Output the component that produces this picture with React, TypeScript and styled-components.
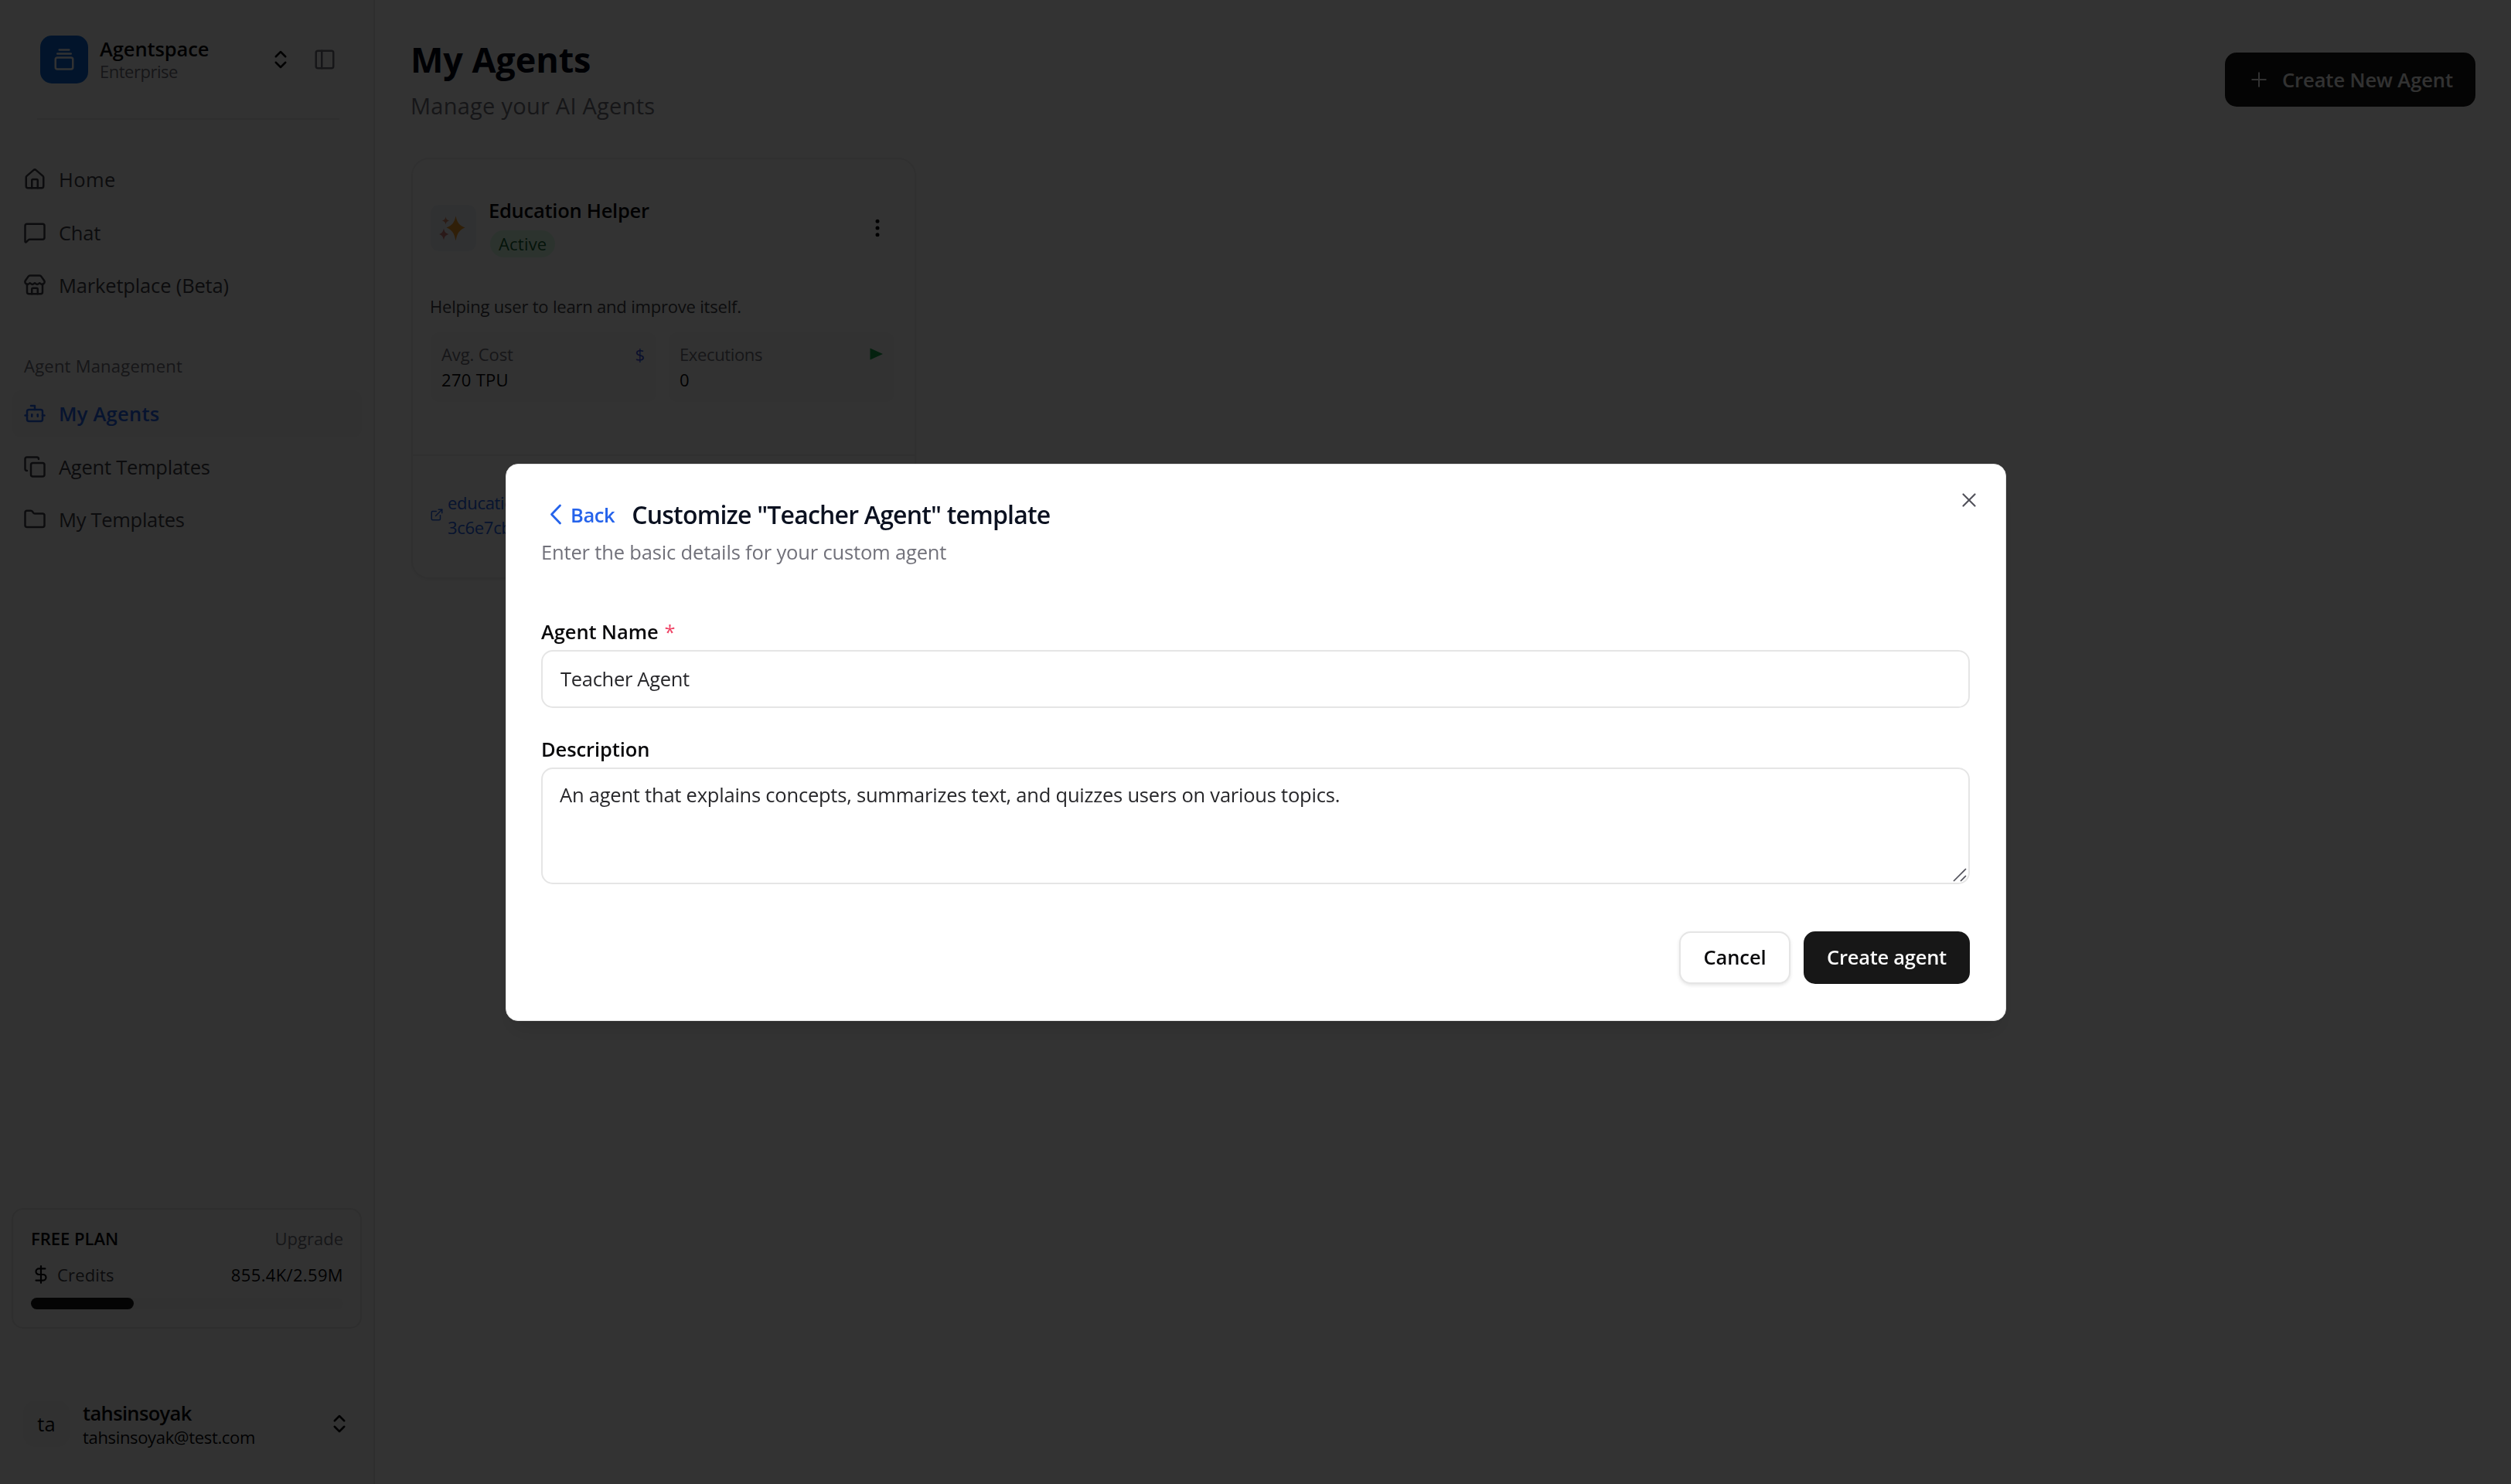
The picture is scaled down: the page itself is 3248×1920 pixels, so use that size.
import React from 'react';
import styled, { createGlobalStyle, css } from 'styled-components';
import {
  Bot,
  ChevronsUpDown,
  Copy,
  DollarSign,
  EllipsisVertical,
  ExternalLink,
  Folder,
  GalleryVerticalEnd,
  House,
  MessageSquare,
  PanelLeft,
  Plus,
  Store,
  X,
} from 'lucide-react';

const color = {
  ink: '#09090b',
  text: '#3f3f46',
  muted: '#71717a',
  line: '#e5e5e5',
  faint: '#efeff0',
  blue: '#2563eb',
  primary: '#171717',
};

const Global = createGlobalStyle`
  *, *::before, *::after { box-sizing: border-box; }
  html, body, #root { height: 100%; }
  body {
    margin: 0;
    overflow: hidden;
    background: #ffffff;
    color: ${color.ink};
    font-family: "Open Sans", "Noto Sans", sans-serif;
    font-size: 25.5px;
  }
  button, input, textarea { font: inherit; color: inherit; }
  svg { display: block; flex: none; }
`;

/* Text */

type TextProps = { $track?: number; $weight?: number; $tone?: string };

const textStyle = css<TextProps>`
  display: block;
  white-space: pre;
  letter-spacing: ${p => p.$track ?? 0}px;
  font-weight: ${p => p.$weight ?? 400};
  color: ${p => p.$tone ?? color.ink};
`;

const Body = styled.span<TextProps>`
  ${textStyle}
  font-size: 25.5px;
  line-height: 32px;
`;

const Small = styled.span<TextProps>`
  ${textStyle}
  font-size: 22px;
  line-height: 26px;
`;

/* Page frame */

const Shell = styled.div`
  display: flex;
  height: 1920px;
`;

const Sidebar = styled.aside`
  display: flex;
  flex-direction: column;
  width: 485px;
  flex: none;
  background: #fafafa;
  border-right: 2px solid ${color.line};
`;

const Workspace = styled.header`
  display: flex;
  align-items: center;
  height: 153px;
  padding: 0 48px 0 52px;
`;

const Logo = styled.div`
  display: grid;
  place-items: center;
  width: 62px;
  height: 62px;
  margin-right: 15px;
  border-radius: 15px;
  background: #0a66d8;
  color: #fafafa;
`;

const Stack = styled.div<{ $gap?: number }>`
  display: flex;
  flex: 1;
  flex-direction: column;
  gap: ${p => p.$gap ?? 0}px;
  padding-bottom: 1px;
`;

const PanelToggle = styled.div`
  margin-left: 27px;
  color: ${color.muted};
`;

const Divider = styled.hr`
  height: 2px;
  margin: 0 44px 0 48px;
  border: 0;
  background: ${color.line};
`;

const Nav = styled.nav<{ $top: number }>`
  display: flex;
  flex-direction: column;
  gap: 7.5px;
  margin-top: ${p => p.$top}px;
  padding: 0 15px 0 16px;
`;

const NavLabel = styled.div`
  display: flex;
  align-items: center;
  height: 53.5px;
  padding: 4px 15px 0;
`;

const NavItem = styled.a<{ $active?: boolean }>`
  display: flex;
  align-items: center;
  gap: 16px;
  height: 61px;
  padding: 0 14px 1px;
  border-radius: 11px;
  color: ${p => (p.$active ? color.blue : color.text)};
  background: ${p => (p.$active ? '#f4f4f5' : 'transparent')};
`;

const PlanCard = styled.section`
  display: flex;
  flex-direction: column;
  height: 156px;
  margin: auto 15px 0 15px;
  padding: 20px 22px 0 23px;
  border: 2px solid ${color.line};
  border-radius: 15px;
`;

const PlanRow = styled.div`
  display: flex;
  align-items: center;
  justify-content: space-between;
  height: 34px;
  margin-bottom: 13px;
`;

const Credits = styled.div`
  display: flex;
  align-items: center;
  gap: 8px;
  color: ${color.ink};
`;

const Track = styled.div`
  height: 15px;
  border-radius: 8px;
  background: #f4f4f5;
`;

const Fill = styled.div`
  width: 33%;
  height: 100%;
  border-radius: 8px;
  background: ${color.primary};
`;

const User = styled.footer`
  display: flex;
  align-items: center;
  height: 86px;
  margin: 80px 0 35px;
  padding: 0 29px 0 30px;
`;

const Avatar = styled.div`
  display: grid;
  place-items: center;
  width: 60px;
  height: 60px;
  margin-right: 17px;
  border-radius: 15px;
  background: #f4f4f5;
`;

/* Main area */

const Main = styled.main`
  flex: 1;
  padding: 46px 46px 0 47px;
`;

const PageHeader = styled.header`
  display: flex;
  align-items: center;
  justify-content: space-between;
`;

const Title = styled.h1`
  margin: 0 0 7px -1px;
  padding-top: 1px;
  font-size: 45px;
  font-weight: 700;
  line-height: 60px;
  letter-spacing: -0.1px;
  white-space: pre;
  color: #020817;
`;

const Subtitle = styled.p`
  margin: 0 0 0 -1px;
  font-size: 29px;
  line-height: 45px;
  letter-spacing: 0.25px;
  color: ${color.muted};
`;

const CreateButton = styled.button`
  display: flex;
  align-items: center;
  gap: 15px;
  width: 324px;
  height: 70px;
  padding: 0 0 0 29px;
  border: 0;
  border-radius: 15px;
  background: ${color.primary};
  color: #fafafa;
`;

const AgentCard = styled.article`
  display: flex;
  flex-direction: column;
  width: 653px;
  height: 545px;
  margin-top: 45px;
  border: 2px solid ${color.faint};
  border-radius: 23px;
  background: #ffffff;
  box-shadow: 0 2px 4px rgba(0, 0, 0, 0.05);
`;

const CardHead = styled.div`
  display: flex;
  align-items: center;
  gap: 16px;
  margin-top: 50px;
  padding: 0 33px 0 23px;
`;

const CardIcon = styled.div`
  display: grid;
  place-items: center;
  width: 59px;
  height: 60px;
  padding-right: 3px;
  border-radius: 11px;
  background: #eff4fb;
`;

const Badge = styled.span`
  align-self: flex-start;
  margin: 10px 0 0 2px;
  padding: 0 11px;
  border-radius: 18px;
  background: #dcfce7;
  color: #166534;
  font-size: 22px;
  line-height: 35px;
  letter-spacing: 0.2px;
`;

const Summary = styled.div`
  padding: 49px 22px 0;
`;

const Stats = styled.div`
  display: grid;
  grid-template-columns: 292px 292px;
  gap: 16px;
  margin: 21px 0 0 23px;
`;

const Stat = styled.div`
  height: 90px;
  padding: 11px 15px 0 14px;
  border-radius: 11px;
  background: #f9f9fa;
`;

const StatLine = styled.div`
  display: flex;
  align-items: center;
  justify-content: space-between;
  height: 33.5px;
`;

const CardFoot = styled.div`
  display: flex;
  flex: 1;
  align-items: center;
  gap: 5px;
  margin-top: 68px;
  padding: 0 22px 5px;
  border-top: 2px solid ${color.faint};
  border-radius: 0 0 21px 21px;
  background: #fcfcfc;
  color: ${color.blue};
`;

const LinkText = styled(Small)`
  line-height: 32px;
`;

/* Dialog */

const Overlay = styled.div`
  position: fixed;
  inset: 0;
  display: flex;
  align-items: center;
  justify-content: center;
  background: rgba(0, 0, 0, 0.8);
`;

const Dialog = styled.section`
  position: relative;
  width: 1941px;
  height: 721px;
  margin-left: 1px;
  padding: 41px 46px 0 45px;
  border: 1px solid ${color.line};
  border-radius: 16px;
  background: #ffffff;
  box-shadow: 0 19px 28px -6px rgba(0, 0, 0, 0.1), 0 8px 11px -8px rgba(0, 0, 0, 0.1);
`;

const CloseButton = styled.div`
  position: absolute;
  top: 31px;
  right: 32px;
  color: #52525b;
`;

const DialogHead = styled.header`
  display: flex;
  align-items: center;
  height: 48px;
  padding-left: 11px;
`;

const BackLink = styled.a`
  display: flex;
  align-items: center;
  gap: 11px;
  margin-right: 22px;
  color: ${color.blue};
`;

const DialogTitle = styled.h2`
  margin: 0;
  font-size: 32px;
  font-weight: 600;
  line-height: 48px;
  letter-spacing: -0.8px;
  white-space: pre;
  color: #0b1120;
`;

const DialogNote = styled(Body)`
  margin: 4px 0 65px;
  line-height: 40px;
`;

const Label = styled.label`
  display: flex;
  gap: 8px;
  margin-bottom: 6px;
`;

const LabelText = styled(Body)`
  line-height: 36px;
`;

const fieldStyle = css`
  display: block;
  width: 1848px;
  border: 2px solid ${color.line};
  border-radius: 15px;
  outline: none;
  background: #ffffff;
  color: #27272a;
`;

const Field = styled.input`
  ${fieldStyle}
  height: 75px;
  margin-bottom: 35px;
  padding: 0 23px;
  letter-spacing: -0.3px;
`;

const AreaWrap = styled.div`
  position: relative;
  width: 1848px;
`;

const Area = styled.textarea`
  ${fieldStyle}
  height: 151px;
  padding: 14px 22px;
  line-height: 38px;
  letter-spacing: -0.22px;
  resize: none;
`;

const Grip = styled.svg`
  position: absolute;
  right: 4px;
  bottom: 3px;
`;

const Actions = styled.div`
  display: flex;
  justify-content: flex-end;
  gap: 17px;
  margin-top: 61px;
`;

const Action = styled.button<{ $primary?: boolean }>`
  display: grid;
  place-items: center;
  width: ${p => (p.$primary ? 215 : 144)}px;
  height: 68px;
  padding: 0 0 1px;
  border: ${p => (p.$primary ? '0' : `2px solid ${color.line}`)};
  border-radius: 15px;
  background: ${p => (p.$primary ? color.primary : '#ffffff')};
  box-shadow: ${p => (p.$primary ? 'none' : '0 2px 4px rgba(0, 0, 0, 0.1)')};
`;

const Sparkles = () => (
  <svg width="34" height="33" viewBox="0 0 34 33">
    <path d="M21.500 0.500C23.500 9 25.500 12 33.500 15.500C25.500 19 23.500 23 21.500 32.500C19.500 23 17.500 19 9.500 15.500C17.500 12 19.500 9 21.500 0.500Z" fill="#ee9a2c" />
    <path d="M8.500 1.500C9.200 4.500 10 5.500 13 6.500C10 7.500 9.200 8.500 8.500 11.500C7.800 8.500 7 7.500 4 6.500C7 5.500 7.800 4.500 8.500 1.500Z" fill="#d98a6a" />
    <path d="M6 16.500C7 21 8.200 22.500 12.500 24C8.200 25.500 7 27 6 31.500C5 27 3.800 25.500 0 24C3.800 22.500 5 21 6 16.500Z" fill="#cf7f78" />
  </svg>
);

const BackChevron = () => (
  <svg width="16" height="27" viewBox="0 0 16 27" fill="none" stroke="currentColor" strokeWidth="2.8" strokeLinecap="round" strokeLinejoin="round">
    <path d="M13.500 2 2.500 13.500 13.500 25" />
  </svg>
);

const PlayMark = () => (
  <svg width="17" height="16" viewBox="0 0 17 16" fill="#16a34a">
    <path d="M0.500 0.500 17 8 0.500 15.500Z" />
  </svg>
);

const mainNav = [
  { label: 'Home', icon: House, track: 0.42 },
  { label: 'Chat', icon: MessageSquare, track: -0.2 },
  { label: 'Marketplace (Beta)', icon: Store, track: -0.16 },
];

const agentNav = [
  { label: 'My Agents', icon: Bot, track: 0.25, active: true },
  { label: 'Agent Templates', icon: Copy, track: -0.25 },
  { label: 'My Templates', icon: Folder, track: -0.29 },
];

type NavEntry = { label: string; icon: React.ElementType; track: number; active?: boolean };

const NavRow = ({ label, icon: Icon, track, active }: NavEntry) => (
  <NavItem $active={active}>
    <Icon size={30} />
    <Body $track={track} $weight={active ? 600 : 400} $tone={active ? color.blue : color.text}>
      {label}
    </Body>
  </NavItem>
);

export default function App() {
  return (
    <>
      <Global />
      <Shell>
        <Sidebar>
          <Workspace>
            <Logo>
              <GalleryVerticalEnd size={30} />
            </Logo>
            <Stack>
              <Body $weight={600} $track={-0.1}>Agentspace</Body>
              <Small $track={-0.49} $tone={color.muted}>Enterprise</Small>
            </Stack>
            <ChevronsUpDown size={30} />
            <PanelToggle>
              <PanelLeft size={30} />
            </PanelToggle>
          </Workspace>
          <Divider />
          <Nav $top={47}>
            {mainNav.map(n => <NavRow key={n.label} {...n} />)}
          </Nav>
          <Nav $top={44}>
            <NavLabel>
              <Small $track={0.23} $tone={color.muted}>Agent Management</Small>
            </NavLabel>
            {agentNav.map(n => <NavRow key={n.label} {...n} />)}
          </Nav>
          <PlanCard>
            <PlanRow>
              <Small $weight={600}>FREE PLAN</Small>
              <Small $tone={color.muted}>Upgrade</Small>
            </PlanRow>
            <PlanRow>
              <Credits>
                <DollarSign size={26} />
                <Small $track={0.16} $tone={color.text}>Credits</Small>
              </Credits>
              <Small $track={0.35}>855.4K/2.59M</Small>
            </PlanRow>
            <Track>
              <Fill />
            </Track>
          </PlanCard>
          <User>
            <Avatar>
              <Body>ta</Body>
            </Avatar>
            <Stack $gap={2}>
              <Body $weight={600} $track={-0.65}>tahsinsoyak</Body>
              <Small $track={-0.34}>tahsinsoyak@test.com</Small>
            </Stack>
            <ChevronsUpDown size={30} />
          </User>
        </Sidebar>

        <Main>
          <PageHeader>
            <div>
              <Title>My Agents</Title>
              <Subtitle>Manage your AI Agents</Subtitle>
            </div>
            <CreateButton>
              <Plus size={30} strokeWidth={1.6} />
              <Body $weight={600} $track={-0.07} $tone="#fafafa">Create New Agent</Body>
            </CreateButton>
          </PageHeader>

          <AgentCard>
            <CardHead>
              <CardIcon>
                <Sparkles />
              </CardIcon>
              <Stack>
                <Body $weight={600} $track={-0.26}>Education Helper</Body>
                <Badge>Active</Badge>
              </Stack>
              <EllipsisVertical size={30} />
            </CardHead>
            <Summary>
              <Small $track={-0.2} $tone={color.text}>Helping user to learn and improve itself.</Small>
            </Summary>
            <Stats>
              <Stat>
                <StatLine>
                  <Small $track={-0.1} $tone={color.muted}>Avg. Cost</Small>
                  <Small $tone="#3b4fe0">$</Small>
                </StatLine>
                <StatLine>
                  <Small $track={0.3}>270 TPU</Small>
                </StatLine>
              </Stat>
              <Stat>
                <StatLine>
                  <Small $track={-0.36} $tone={color.muted}>Executions</Small>
                  <PlayMark />
                </StatLine>
                <StatLine>
                  <Small>0</Small>
                </StatLine>
              </Stat>
            </Stats>
            <CardFoot>
              <ExternalLink size={18} />
              <LinkText $track={-0.3} $tone={color.blue}>{'education-\n3c6e7cb1'}</LinkText>
            </CardFoot>
          </AgentCard>
        </Main>
      </Shell>

      <Overlay>
        <Dialog>
          <CloseButton>
            <X size={30} strokeWidth={1.7} />
          </CloseButton>
          <DialogHead>
            <BackLink>
              <BackChevron />
              <Body $weight={600} $track={-0.4} $tone={color.blue}>Back</Body>
            </BackLink>
            <DialogTitle>Customize "Teacher Agent" template</DialogTitle>
          </DialogHead>
          <DialogNote $track={-0.16} $tone={color.muted}>Enter the basic details for your custom agent</DialogNote>
          <Label>
            <LabelText $weight={600} $track={-0.08}>Agent Name</LabelText>
            <LabelText $tone="#ef4466">*</LabelText>
          </Label>
          <Field readOnly value="Teacher Agent" />
          <Label>
            <LabelText $weight={600} $track={-0.1}>Description</LabelText>
          </Label>
          <AreaWrap>
            <Area readOnly value="An agent that explains concepts, summarizes text, and quizzes users on various topics." />
            <Grip width="18" height="18" viewBox="0 0 18 18" stroke="#52525b" strokeWidth="1.7" fill="none">
              <path d="M1 17 17 1M10 17 17 10" />
            </Grip>
          </AreaWrap>
          <Actions>
            <Action>
              <Body $weight={600} $track={-0.1}>Cancel</Body>
            </Action>
            <Action $primary>
              <Body $weight={600} $track={-0.26} $tone="#fafafa">Create agent</Body>
            </Action>
          </Actions>
        </Dialog>
      </Overlay>
    </>
  );
}
